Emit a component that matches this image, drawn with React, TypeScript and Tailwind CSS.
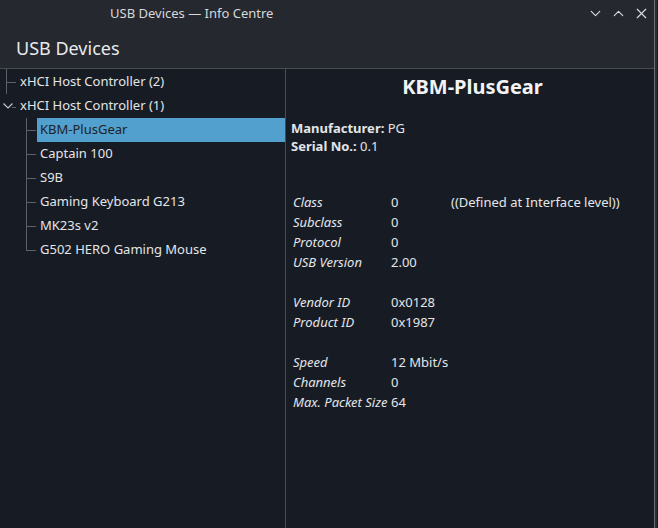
import { ChevronDown, ChevronUp, X } from "lucide-react";

const children = [
  "KBM-PlusGear",
  "Captain 100",
  "S9B",
  "Gaming Keyboard G213",
  "MK23s v2",
  "G502 HERO Gaming Mouse",
];

type Row = { label: string; value: string; note?: string } | null;

const rows: Row[] = [
  { label: "Class", value: "0", note: "((Defined at Interface level))" },
  { label: "Subclass", value: "0" },
  { label: "Protocol", value: "0" },
  { label: "USB Version", value: "2.00" },
  null,
  { label: "Vendor ID", value: "0x0128" },
  { label: "Product ID", value: "0x1987" },
  null,
  { label: "Speed", value: "12 Mbit/s" },
  { label: "Channels", value: "0" },
  { label: "Max. Packet Size", value: "64" },
];

export default function App() {
  return (
    <div
      className="flex h-[528px] w-[658px] overflow-hidden bg-[#171c24] text-[13px] text-[#e3e5e8]"
      style={{ fontFamily: '"Noto Sans", "Open Sans", sans-serif' }}
    >
      <div className="flex w-[655px] flex-col border-r border-[#6b6f75]">
        {/* title bar + header */}
        <div className="flex h-[69px] shrink-0 flex-col border-b border-[#474b52] bg-[#25282e]">
          <div className="relative flex h-[28px] items-center">
            <span className="pl-[110px] text-[13px] text-[#d6d8db]">USB Devices — Info Centre</span>
            <div className="absolute right-[4px] top-[5px] flex items-center gap-[6px] text-[#dcdee0]">
              <ChevronDown size={17} strokeWidth={1.6} />
              <ChevronUp size={17} strokeWidth={1.6} />
              <X size={17} strokeWidth={1.6} />
            </div>
          </div>
          <div className="pl-[16px] pt-[7px] text-[18px] leading-[26px] text-[#e8eaed]">USB Devices</div>
        </div>

        <div className="flex flex-1">
          {/* tree */}
          <div className="relative w-[286px] shrink-0 border-r border-[#474b52] pt-px">
            <div className="relative flex h-[24px] items-center pl-[20px]">
              <span className="absolute -top-px left-[6px] h-[25px] w-px bg-[#5c6168]" />
              <span className="absolute left-[6px] top-[12px] h-px w-[10px] bg-[#5c6168]" />
              <span>xHCI Host Controller (2)</span>
            </div>
            <div className="relative flex h-[24px] items-center pl-[20px]">
              <svg className="absolute left-[2px] top-[7px]" width="14" height="10" viewBox="0 0 14 10">
                <path d="M1.5 2.5 L6 7 L10.5 2.5" fill="none" stroke="#c8cbcf" strokeWidth="1.1" />
                <path d="M10 6.5 H14" stroke="#5c6168" strokeWidth="1" />
              </svg>
              <span>xHCI Host Controller (1)</span>
            </div>
            <div className="relative">
              <span className="absolute left-[26px] top-0 h-[132px] w-px bg-[#5c6168]" />
              {children.map((c, i) => (
                <div key={c} className="relative flex h-[24px] items-center">
                  <span className="absolute left-[26px] top-[12px] h-px w-[10px] bg-[#5c6168]" />
                  <div
                    className={`ml-[37px] flex h-[24px] flex-1 items-center pl-[3px] ${
                      i === 0 ? "bg-[#52a0cd] text-[#1e2227]" : ""
                    }`}
                  >
                    {c}
                  </div>
                </div>
              ))}
            </div>
          </div>

          {/* details */}
          <div className="flex-1 pl-[5px]">
            <div className="pt-[4px] text-center text-[20px] font-bold leading-[28px] text-[#f2f3f5]">
              KBM-PlusGear
            </div>
            <div className="mt-[18px] leading-[18px]">
              <div>
                <b className="font-bold">Manufacturer:</b> PG
              </div>
              <div>
                <b className="font-bold">Serial No.:</b> 0.1
              </div>
            </div>
            <div className="mt-[38px] pl-[2px]">
              {rows.map((r, i) =>
                r ? (
                  <div key={i} className="flex h-[20px] items-center">
                    <span className="w-[98px] italic">{r.label}</span>
                    <span className="w-[60px]">{r.value}</span>
                    {r.note && <span>{r.note}</span>}
                  </div>
                ) : (
                  <div key={i} className="h-[20px]" />
                )
              )}
            </div>
          </div>
        </div>
      </div>
      <div className="w-[2px] bg-[#2a2e33]" />
    </div>
  );
}
